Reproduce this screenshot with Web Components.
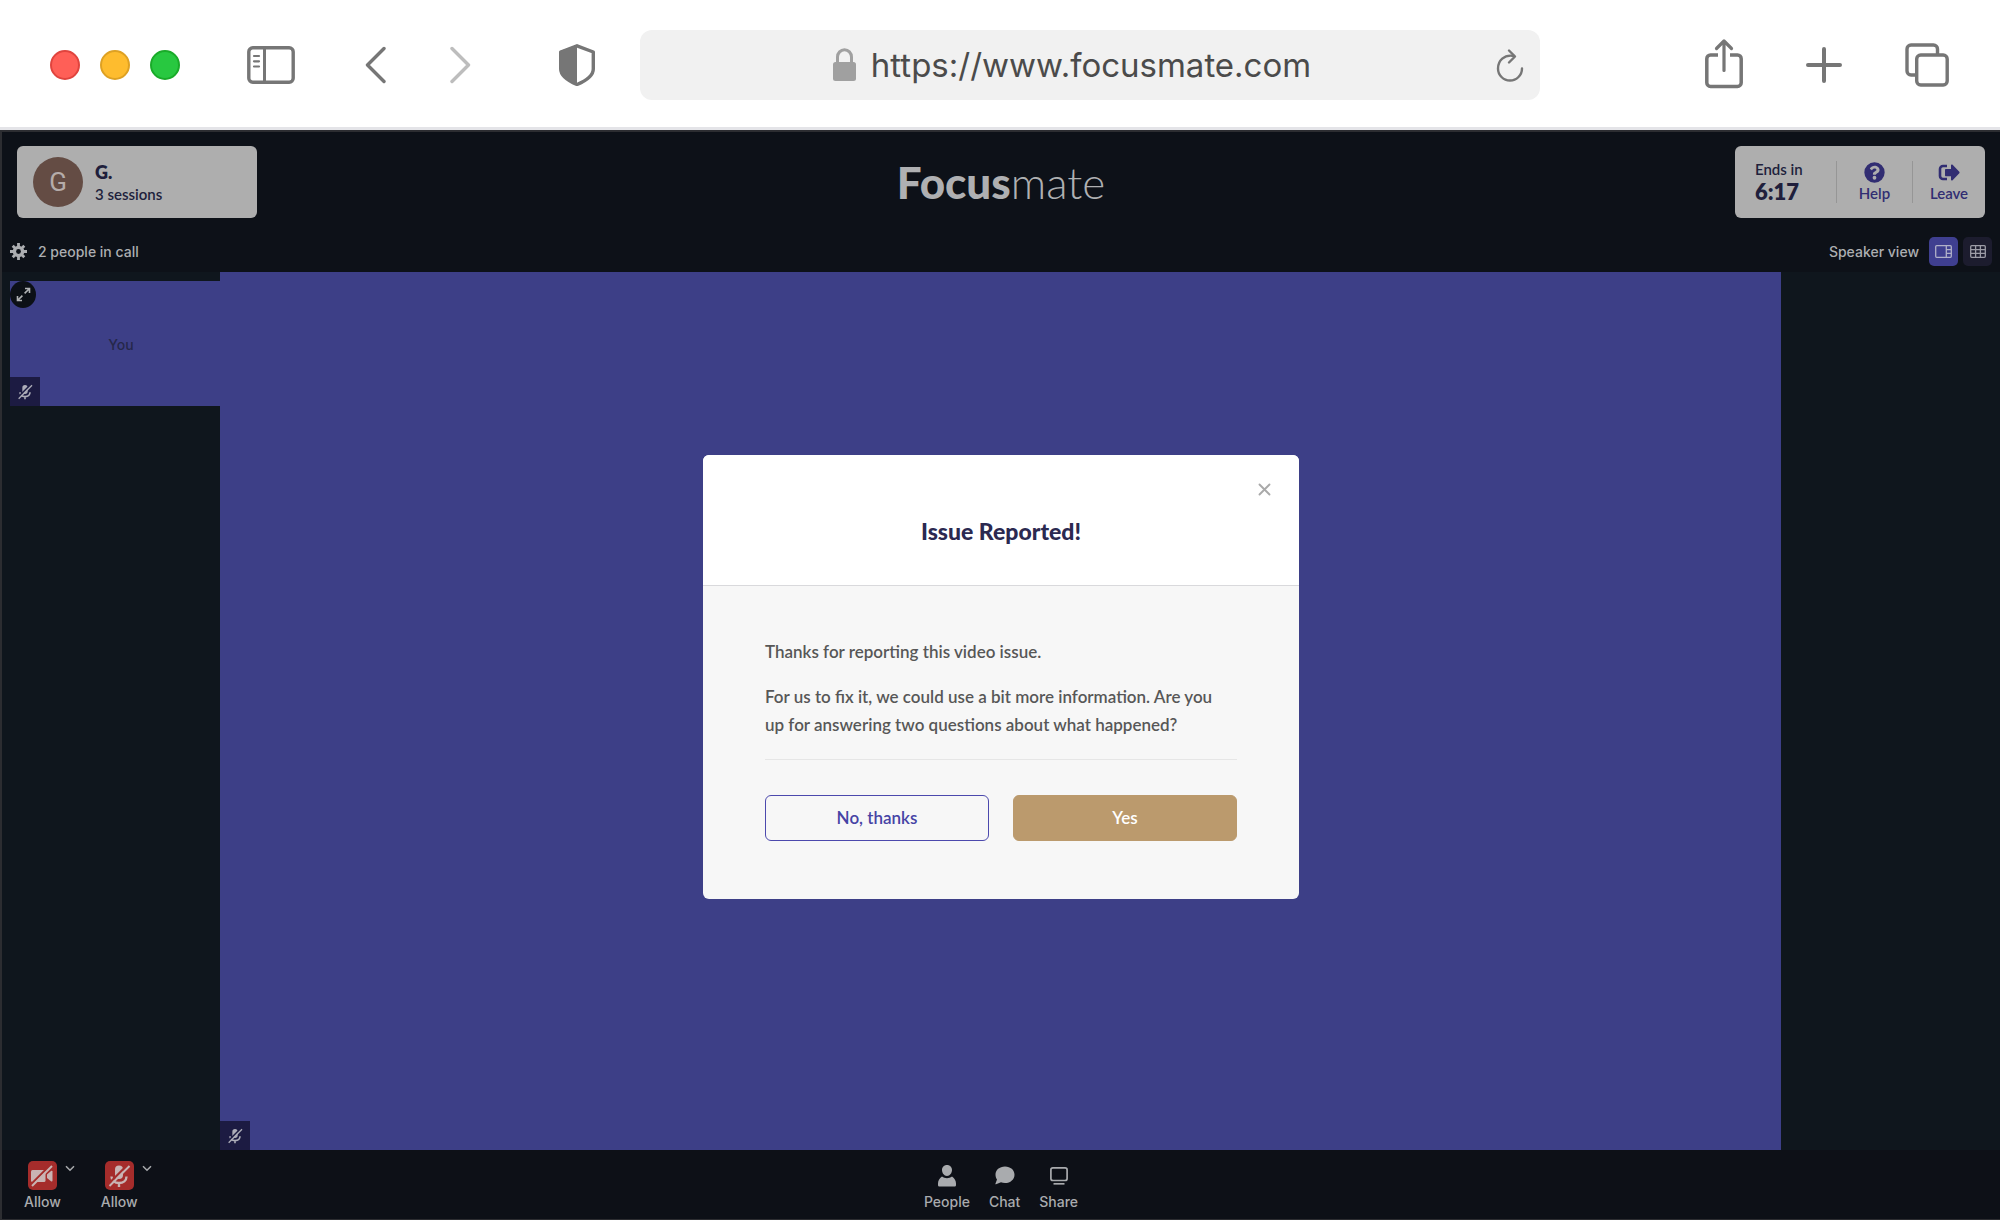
<!DOCTYPE html>
<html lang="en">
<head>
<meta charset="utf-8">
<title>Focusmate</title>
<style>
  body { margin: 0; min-height: 100vh; display: flex; flex-direction: column; background: #0d1118; font-family: Lato, "Open Sans", sans-serif; }
  call-app { flex: 1; }
</style>
</head>
<body>
<browser-toolbar></browser-toolbar>
<call-app></call-app>

<script>
const BASE = `
  :host, *, *::before { box-sizing: border-box; }
  button { font: inherit; color: inherit; background: none; border: 0; padding: 0; margin: 0; cursor: pointer; }
  svg { display: block; }
`;

class BaseElement extends HTMLElement {
  connectedCallback() {
    if (this.shadowRoot) return;
    const root = this.attachShadow({ mode: "open" });
    root.innerHTML = `<style>${BASE}${this.css()}</style>${this.html()}`;
  }
  css() { return ""; }
  html() { return ""; }
}

/* Browser chrome: window buttons, navigation, address field, actions */
customElements.define("browser-toolbar", class extends BaseElement {
  css() { return `
    :host { display: flex; align-items: center; height: 130px; padding: 2px 51px 0 50px; background: #fff; border-bottom: 3px solid #e4e4e8; color: #767676; }
    .lights { display: flex; gap: 20px; }
    .lights button { width: 30px; height: 30px; border-radius: 50%; border: 2px solid; }
    .lights .red { background: #ff5f57; border-color: #e0443e; }
    .lights .yellow { background: #febc2e; border-color: #dea123; }
    .lights .green { background: #28c840; border-color: #1aab29; }
    .nav { display: flex; align-items: center; margin-left: 67px; }
    .nav button + button { margin-left: 70px; }
    .nav .forward { margin-left: 64px; color: #bdbdbd; }
    .nav .shield { margin-left: 88px; }
    .address { display: flex; align-items: center; width: 45vw; height: 70px; margin-left: 45px; padding: 0 16px 0 8px; border-radius: 12px; background: #f1f1f1; }
    .place { flex: 1; display: flex; align-items: center; justify-content: center; gap: 15px; color: #a0a0a0; }
    input { field-sizing: content; border: 0; padding: 0; outline: 0; background: none; color: #4b4b4b; font: 400 33px/44px Inter, sans-serif; }
    .actions { display: flex; align-items: center; gap: 63px; margin-left: auto; }
  `; }
  html() { return `
    <div class="lights">
      <button class="red" aria-label="Close window"></button>
      <button class="yellow" aria-label="Minimise window"></button>
      <button class="green" aria-label="Zoom window"></button>
    </div>
    <nav class="nav">
      <button aria-label="Sidebar"><svg width="48" height="38" viewBox="0 0 48 38" fill="none" stroke="currentColor"><rect x="1.8" y="1.8" width="44.4" height="34.4" rx="4" stroke-width="3.4"/><path d="M17.5 2v34" stroke-width="3"/><path d="M7 10h5M7 15.300h5M7 20.500h5" stroke-width="2.200" stroke-linecap="round"/></svg></button>
      <button aria-label="Back"><svg width="21" height="38" viewBox="0 0 21 38" fill="none" stroke="currentColor" stroke-width="3.400" stroke-linecap="round" stroke-linejoin="round"><path d="M19 2.500 2.500 19 19 35.500"/></svg></button>
      <button class="forward" aria-label="Forward"><svg width="21" height="38" viewBox="0 0 21 38" fill="none" stroke="currentColor" stroke-width="3.400" stroke-linecap="round" stroke-linejoin="round"><path d="M2 2.500 18.500 19 2 35.500"/></svg></button>
      <button class="shield" aria-label="Privacy report"><svg width="36" height="42" viewBox="0 0 36 42"><path d="M18 1.800 34.300 8v17c0 7-8 12-16.300 15.500C9.700 37 1.700 32 1.700 25V8Z" fill="none" stroke="currentColor" stroke-width="3.400" stroke-linejoin="round"/><path d="M18 1v40C9 37 1 32 1 25V7Z" fill="currentColor"/></svg></button>
    </nav>
    <div class="address">
      <label class="place">
        <svg width="23" height="33" viewBox="0 0 23 33" aria-label="Secure"><rect x="0" y="14" width="23" height="19" rx="2.500" fill="currentColor"/><path d="M4.500 15V9a7 7.300 0 0 1 14 0v6" fill="none" stroke="currentColor" stroke-width="3"/></svg>
        <input type="text" aria-label="Address" value="https://www.focusmate.com">
      </label>
      <button aria-label="Reload"><svg width="28" height="34" viewBox="0 0 28 34" fill="none" stroke="currentColor" stroke-width="2.400" stroke-linecap="round" stroke-linejoin="round"><path d="M18 8C8 6 2 13 2 20.500a12 12 0 0 0 24 0"/><path d="m13 2.500 6 6-6 6"/></svg></button>
    </div>
    <div class="actions">
      <button aria-label="Share"><svg width="38" height="56" viewBox="0 0 38 56" fill="none" stroke="currentColor" stroke-width="3.500"><path d="M13 18H5.500a3.700 3.700 0 0 0-3.700 3.700v24a3.700 3.700 0 0 0 3.700 3.700h27a3.700 3.700 0 0 0 3.700-3.700v-24A3.700 3.700 0 0 0 32.500 18H25"/><path d="M19 33.500V5M11.500 11.500 19 4l7.500 7.500" stroke-width="3.200" stroke-linecap="round" stroke-linejoin="round"/></svg></button>
      <button aria-label="New tab"><svg width="36" height="36" viewBox="0 0 36 36" fill="none" stroke="currentColor" stroke-width="4" stroke-linecap="round"><path d="M18 2v32M2 18h32"/></svg></button>
      <button aria-label="Tab overview"><svg width="44" height="44" viewBox="0 0 44 44" fill="none" stroke="currentColor" stroke-width="3.400"><path d="M10 32H6a4 4 0 0 1-4-4V6a4 4 0 0 1 4-4h22.500a4 4 0 0 1 4 4v5"/><rect x="11.700" y="12" width="30.500" height="30" rx="4"/></svg></button>
    </div>`; }
});

/* Whole call page */
customElements.define("call-app", class extends BaseElement {
  css() { return `
    :host { position: relative; display: flex; flex-direction: column; border: solid #2c2d31; border-width: 2px 0 1px 2px; }
    .stage { flex: 1; display: grid; grid-template-columns: 218px minmax(0, 1fr) 219px; background: #0f161d; }
    .self { padding: 9px 0 0 8px; }
    .self video-tile { height: 125px; padding: 2px 0 0 12px; }
    .layer { position: absolute; inset: 0; display: grid; place-items: center; padding-top: 2px; }
  `; }
  html() { return `
    <call-header></call-header>
    <call-status></call-status>
    <main class="stage">
      <div class="self"><video-tile expandable>You</video-tile></div>
      <video-tile></video-tile>
    </main>
    <call-tray></call-tray>
    <div class="layer">
      <issue-dialog>
        <span slot="title">Issue Reported!</span>
        <p>Thanks for reporting this video issue.</p>
        <p>For us to fix it, we could use a bit more information. Are you up for answering two questions about what happened?</p>
      </issue-dialog>
    </div>`; }
});

customElements.define("call-header", class extends BaseElement {
  css() { return `
    :host { display: grid; grid-template-columns: 1fr auto 1fr; align-items: center; padding: 14px 15px 0; }
    .card { display: flex; align-items: center; height: 72px; border-radius: 6px; background: #aeaeae; color: #201f3c; font-size: 15px; line-height: 20px; font-weight: 600; }
    .partner { width: 240px; padding-left: 16px; gap: 12px; }
    .avatar { display: grid; place-items: center; width: 50px; height: 50px; border-radius: 50%; background: #644c44; color: #b5acaa; font: 400 26px/30px Roboto, sans-serif; }
    .name { font-size: 18px; line-height: 24px; font-weight: 800; }
    h1 { margin: 0; color: #afb0b2; font-size: 44px; line-height: 48px; font-weight: 900; }
    h1 span { font-weight: 300; }
    .session { justify-self: end; width: 250px; }
    .ends { flex: 1; padding-left: 20px; }
    .time { font-size: 22px; line-height: 26px; font-weight: 800; }
    .card button { display: flex; flex-direction: column; align-items: center; justify-content: center; width: 76px; height: 42px; border-left: 1px solid #969696; color: #312d72; }
    .card button:last-child { width: 73px; }
  `; }
  html() { return `
    <section class="card partner">
      <div class="avatar">G</div>
      <div><div class="name">G.</div><div>3 sessions</div></div>
    </section>
    <h1>Focus<span>mate</span></h1>
    <section class="card session">
      <div class="ends"><div>Ends in</div><div class="time">6:17</div></div>
      <button><svg width="21" height="21" viewBox="0 0 512 512" fill="currentColor"><path d="M504 256a248 248 0 1 1-496 0 248 248 0 0 1 496 0ZM262.700 90c-54.500 0-89.300 23-116.500 63.800a12 12 0 0 0 2.600 16.300l34.700 26.300a12 12 0 0 0 16.700-2.100c17.800-22.700 30.100-35.800 57.300-35.800 20.400 0 45.700 13.100 45.700 33 0 15-12.400 22.700-32.500 34C247.100 238.500 216 254.900 216 296v4a12 12 0 0 0 12 12h56a12 12 0 0 0 12-12v-1.300c0-28.500 83.200-29.600 83.200-106.700 0-58-60.200-102-116.500-102ZM256 338a46 46 0 1 0 0 92 46 46 0 0 0 0-92Z"/></svg>Help</button>
      <button><svg width="22" height="21" viewBox="0 0 22 21" fill="none"><path d="M9 4H5a3 3 0 0 0-3 3v7a3 3 0 0 0 3 3h4" stroke="currentColor" stroke-width="2.600"/><path d="M7 8v5.300c0 .6.400 1 1 1h5v3.200c0 .9 1 1.300 1.600.7l6.700-7c.4-.4.400-1 0-1.400l-6.700-7c-.6-.6-1.600-.2-1.600.7V7H8c-.6 0-1 .4-1 1Z" fill="currentColor"/></svg>Leave</button>
    </section>`; }
});

customElements.define("call-status", class extends BaseElement {
  css() { return `
    :host { display: flex; justify-content: space-between; padding: 19px 8px 6px 8px; color: #acaeb1; font: 500 14px/20px Inter, sans-serif; }
    div { display: flex; align-items: center; gap: 11px; }
    .views { gap: 5px; }
    .views span { padding-right: 5px; }
    .views button { display: grid; place-items: center; width: 29px; height: 29px; border-radius: 5px; background: #1c1c2e; color: #9c9ca6; }
    .views .on { background: #3f3f90; color: #b0b0c8; }
  `; }
  html() { return `
    <div>
      <button aria-label="Settings"><svg width="17" height="17" viewBox="0 0 17 17"><g stroke="currentColor" stroke-width="2.800"><path d="M8.500 0v17M0 8.500h17M2.700 2.700l11.600 11.600M14.300 2.700 2.700 14.300"/></g><circle cx="8.500" cy="8.500" r="5.800" fill="currentColor"/><circle cx="8.500" cy="8.500" r="2.400" fill="#0d1118"/></svg></button>
      <span>2 people in call</span>
    </div>
    <div class="views">
      <span>Speaker view</span>
      <button class="on" aria-label="Speaker view"><svg width="17" height="13" viewBox="0 0 17 13" fill="none" stroke="currentColor" stroke-width="1.300"><rect x=".7" y=".7" width="15.600" height="11.600" rx="1"/><path d="M11.300 1v11M11.300 4.600H16M11.300 8.400H16"/></svg></button>
      <button aria-label="Grid view"><svg width="16" height="13" viewBox="0 0 16 13" fill="none" stroke="currentColor" stroke-width="1.300"><rect x=".7" y=".7" width="14.600" height="11.600" rx="1"/><path d="M5.600 1v11M10.400 1v11M1 4.600h14M1 8.400h14"/></svg></button>
    </div>`; }
});

/* Microphone with a slash; the gap beside the slash takes the backing colour */
const micOff = (size, back) => `<svg width="${size}" height="${size}" viewBox="0 0 24 24" fill="none"><rect x="8" y="1.500" width="8" height="13.500" rx="4" fill="currentColor"/><path d="M4.500 12.500c0 4 3.300 6.500 7.500 6.500s7.500-2.500 7.500-6.500M12 19v4" stroke="currentColor" stroke-width="2.400"/><path d="M1 20.500 20.500 1" stroke="${back}" stroke-width="2.400"/><path d="M2.500 22 22.500 2" stroke="currentColor" stroke-width="2"/></svg>`;

/* One participant's picture, with its name slotted in */
customElements.define("video-tile", class extends BaseElement {
  css() { return `
    :host { position: relative; display: grid; place-items: center; background: #3d3f87; color: #25274a; font: 500 14px/20px Inter, sans-serif; }
    .muted { position: absolute; left: 0; bottom: 0; display: grid; place-items: center; width: 30px; height: 29px; background: #1c1b42; color: #adadb8; }
    .expand { position: absolute; left: 0; top: 0; display: grid; place-items: center; width: 26px; height: 27px; border-radius: 50%; background: #0c1016; color: #b0b2b4; }
  `; }
  html() { return `
    <slot></slot>
    ${this.hasAttribute("expandable") ? `<button class="expand" aria-label="Expand"><svg width="15" height="15" viewBox="0 0 15 15" fill="none" stroke="currentColor" stroke-width="1.600"><path d="M9 1.500h4.500V6M13.500 1.500 8.600 6.400M1.500 9v4.500H6M1.500 13.500l4.900-4.900"/></svg></button>` : ""}
    <span class="muted" role="img" aria-label="Microphone off">${micOff(16, "#1c1b42")}</span>`; }
});

customElements.define("tray-button", class extends BaseElement {
  css() { return `
    :host { display: block; color: #a9abae; font: 500 14px/20px Inter, sans-serif; }
    button { display: flex; flex-direction: column; align-items: center; gap: 2px; }
    .icon { display: grid; place-items: center; width: 29px; height: 29px; }
    :host([blocked]) .icon { border-radius: 5px; background: #a52c2b; color: #c9b4b4; }
  `; }
  html() { return `<button><span class="icon"><slot name="icon"></slot></span><slot></slot></button>`; }
});

customElements.define("call-tray", class extends BaseElement {
  css() { return `
    :host { display: grid; grid-template-columns: 1fr auto 1fr; padding: 11px 22px 7px; background: #0d1017; color: #a9abae; }
    div { display: flex; }
    .more { align-self: start; margin: 4px 26px 0 4px; }
    .panels { gap: 19px; }
  `; }
  html() {
    const more = name => `<button class="more" aria-label="${name}"><svg width="10" height="7" viewBox="0 0 10 7" fill="none" stroke="currentColor" stroke-width="1.500"><path d="m1 1.200 4 4 4-4"/></svg></button>`;
    return `
    <div>
      <tray-button blocked><svg slot="icon" width="24" height="24" viewBox="0 0 24 24"><rect x="1" y="6" width="14.500" height="12" rx="1.500" fill="currentColor"/><path d="M17 10.500 21 7c.8-.6 1.500-.3 1.500.6v9c0 .9-.7 1.200-1.500.6L17 14Z" fill="currentColor"/><path d="M1 20.500 20.500 1" stroke="#a52c2b" stroke-width="2.400"/><path d="M2 22 22 2" stroke="currentColor" stroke-width="2"/></svg>Allow</tray-button>
      ${more("Camera options")}
      <tray-button blocked><span slot="icon">${micOff(24, "#a52c2b")}</span>Allow</tray-button>
      ${more("Microphone options")}
    </div>
    <div class="panels">
      <tray-button><svg slot="icon" width="18" height="22" viewBox="0 0 18 22" fill="currentColor"><path d="M9 0c3 0 5 2.200 5 5s-2 6-5 6-5-3.200-5-6 2-5 5-5ZM4 11.500c3 2.300 7 2.300 10 0 2.700 1.500 4 4.500 4 7V20c0 1-.7 1.500-1.600 1.500H1.600C.7 21.500 0 21 0 20v-1.500c0-2.500 1.300-5.500 4-7Z"/></svg>People</tray-button>
      <tray-button><svg slot="icon" width="20" height="19" viewBox="0 0 20 19" fill="currentColor"><path d="M10 .5c5.600 0 9.500 3.600 9.500 8.200S15.600 17 10 17c-1.500 0-2.800-.2-4-.7L1 18.300c-.5.200-.8-.2-.6-.6L2 13.500C1 12.200.500 10.500.500 8.700.5 4.100 4.400.5 10 .5Z"/></svg>Chat</tray-button>
      <tray-button><svg slot="icon" width="18" height="18" viewBox="0 0 18 18" fill="none" stroke="currentColor" stroke-width="1.700"><rect x=".9" y=".9" width="16.200" height="12.600" rx="2"/><path d="M3.500 16.800h11"/></svg>Share</tray-button>
    </div>`; }
});

customElements.define("issue-dialog", class extends BaseElement {
  css() { return `
    :host { display: block; width: 596px; border-radius: 6px; overflow: hidden; background: #f7f7f7; color: #575757; font-size: 17px; line-height: 28px; font-weight: 600; }
    header { position: relative; display: grid; place-items: center; height: 131px; padding-top: 22px; background: #fff; border-bottom: 1px solid #d9d9dc; }
    h2 { margin: 0; color: #2b2950; font-size: 23px; line-height: 28px; font-weight: 900; }
    .close { position: absolute; right: 28px; top: 28px; color: #a9a9a9; }
    .body { padding: 52px 62px 58px; }
    ::slotted(p) { margin: 0 0 17px; padding-right: 12px; }
    footer { display: grid; grid-template-columns: 1fr 1fr; gap: 24px; margin-top: 20px; padding-top: 35px; border-top: 1px solid #e6e6e6; }
    footer button { height: 46px; border: 1px solid #4c49ad; border-radius: 6px; color: #4643a5; }
    footer .yes { background: #bb9a6d; border-color: #bb9a6d; color: #fff; }
  `; }
  html() { return `
    <section role="dialog" aria-labelledby="title">
      <header>
        <h2 id="title"><slot name="title"></slot></h2>
        <button class="close" aria-label="Close"><svg width="13" height="13" viewBox="0 0 13 13" fill="none" stroke="currentColor" stroke-width="1.900" stroke-linecap="round"><path d="m1.500 1.500 10 10M11.500 1.500l-10 10"/></svg></button>
      </header>
      <div class="body">
        <slot></slot>
        <footer><button>No, thanks</button><button class="yes">Yes</button></footer>
      </div>
    </section>`; }
});
</script>
</body>
</html>
